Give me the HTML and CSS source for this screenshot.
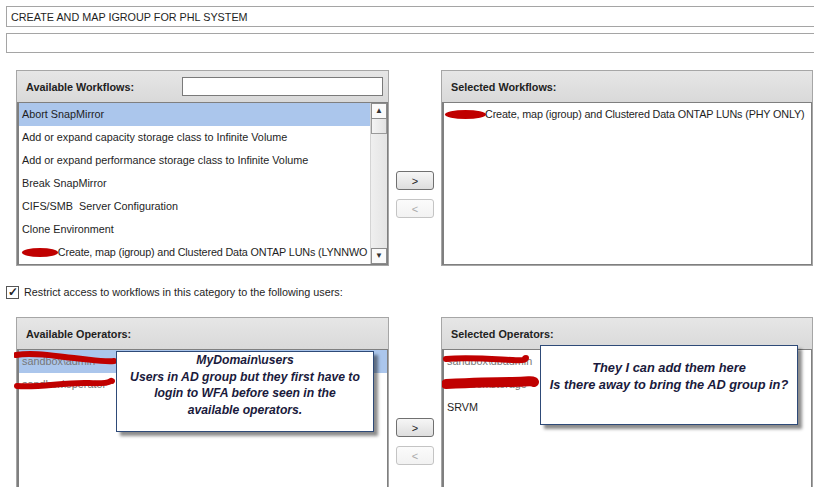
FILE: index.html
```html
<!DOCTYPE html>
<html lang="en">
<head>
    <meta charset="UTF-8">
    <title>Category - CREATE AND MAP IGROUP FOR PHL SYSTEM</title>
    <link rel="stylesheet" href="styles.css">
</head>
<body>
    <div class="field">CREATE AND MAP IGROUP FOR PHL SYSTEM</div>
    <div class="field empty"></div>

    <div class="picker workflows">
        <div class="panel">
            <div class="panel-head">
                <span>Available Workflows:</span>
                <div class="search"></div>
            </div>
            <div class="list with-scroll">
                <div class="rows">
                    <div class="row selected">Abort SnapMirror</div>
                    <div class="row">Add or expand capacity storage class to Infinite Volume</div>
                    <div class="row">Add or expand performance storage class to Infinite Volume</div>
                    <div class="row">Break SnapMirror</div>
                    <div class="row">CIFS/SMB&nbsp; Server Configuration</div>
                    <div class="row">Clone Environment</div>
                    <div class="row tight"><span class="blob"></span> Create, map (igroup) and Clustered Data ONTAP LUNs (LYNNWO</div>
                </div>
                <div class="scrollbar">
                    <div class="arrow up">&#9650;</div>
                    <div class="thumb"></div>
                    <div class="track"></div>
                    <div class="arrow down">&#9660;</div>
                </div>
            </div>
        </div>
        <div class="moves">
            <button class="move">&gt;</button>
            <button class="move" disabled>&lt;</button>
        </div>
        <div class="panel">
            <div class="panel-head"><span>Selected Workflows:</span></div>
            <div class="list">
                <div class="rows">
                    <div class="row tight"><span class="blob wide"></span>Create, map (igroup) and Clustered Data ONTAP LUNs (PHY ONLY)</div>
                </div>
            </div>
        </div>
    </div>

    <label class="restrict">
        <span class="check">&#10003;</span>
        Restrict access to workflows in this category to the following users:
    </label>

    <div class="picker operators">
        <div class="panel">
            <div class="panel-head"><span>Available Operators:</span></div>
            <div class="list">
                <div class="rows">
                    <div class="row selected muted">sandbox\admin</div>
                    <div class="row muted">sandbox\operator</div>
                </div>
            </div>
            <svg class="scribble left" width="110" height="50" viewBox="0 0 110 50">
                <path d="M2 5 C20 2, 40 6, 60 8 S 90 12, 100 11" stroke="#c00000" stroke-width="6" fill="none" stroke-linecap="round"/>
                <path d="M3 36 C25 38, 50 32, 75 33 S 95 30, 98 31" stroke="#c00000" stroke-width="6" fill="none" stroke-linecap="round"/>
            </svg>
            <div class="note note-left">
                MyDomain\users<br>
                Users in AD group but they first have to<br>
                login to WFA before seen in the<br>
                available operators.
            </div>
        </div>
        <div class="moves">
            <button class="move">&gt;</button>
            <button class="move" disabled>&lt;</button>
        </div>
        <div class="panel">
            <div class="panel-head"><span>Selected Operators:</span></div>
            <div class="list">
                <div class="rows">
                    <div class="row muted">sandbox\dbadmin</div>
                    <div class="row muted">sandbox\storage</div>
                    <div class="row">SRVM</div>
                </div>
            </div>
            <svg class="scribble right" width="110" height="50" viewBox="0 0 110 50">
                <path d="M4 9 C25 7, 50 9, 70 10 S 80 8, 84 8" stroke="#c00000" stroke-width="6" fill="none" stroke-linecap="round"/>
                <path d="M4 34 C25 33, 50 32, 70 32 S 88 30, 92 32" stroke="#c00000" stroke-width="10" fill="none" stroke-linecap="round"/>
            </svg>
            <div class="note note-right">
                They I can add them here<br>
                Is there away to bring the AD group in?
            </div>
        </div>
    </div>
</body>
</html>
```

FILE: styles.css
```css
body {
    margin: 0;
    background: #fff;
    font-family: "Liberation Sans", Arial, sans-serif;
    font-size: 10.8px;
    color: #1e1e1e;
    overflow: hidden;
    width: 814px;
    height: 487px;
}

.field {
    box-sizing: border-box;
    margin: 6px 0 0 6px;
    width: 820px;
    height: 21px;
    border: 1px solid #a5a5a5;
    padding: 4px 4px 0;
    background: #fff;
}

.field.empty {
    height: 20px;
}

.picker {
    display: flex;
    padding-left: 16px;
    margin-top: 17px;
}

.panel {
    position: relative;
    box-sizing: border-box;
    width: 373px;
    height: 196px;
    border: 1px solid #a6a6a6;
    display: flex;
    flex-direction: column;
}

.panel + .moves + .panel {
    width: 372px;
}

.operators .panel {
    height: 175px;
    border-bottom: none;
}

.panel-head {
    height: 31px;
    background: linear-gradient(#e6e6e6, #d9d9d9);
    display: flex;
    align-items: center;
    justify-content: space-between;
    padding: 0 5px 0 9px;
    font-weight: bold;
    color: #222;
    flex-shrink: 0;
}

.search {
    width: 199px;
    height: 17px;
    border: 1px solid #7a7a7a;
    background: #fff;
}

.list {
    flex: 1;
    display: flex;
    border: 1px solid #7f7f7f;
    border-left-width: 2px;
    background: #fff;
    overflow: hidden;
}

.operators .list {
    border-bottom: none;
}

.rows {
    flex: 1;
    min-width: 0;
    overflow: hidden;
}

.row {
    height: 23px;
    line-height: 22px;
    padding-left: 3px;
    white-space: nowrap;
    overflow: hidden;
}

.row.tight {
    letter-spacing: -0.15px;
}

.row.selected {
    background: #abc6ec;
}

.row.muted {
    color: #777;
}

.blob {
    display: inline-block;
    width: 36px;
    height: 9px;
    margin-right: -3px;
    background: #c00000;
    border-radius: 50%;
    vertical-align: -1px;
}

.blob.wide {
    width: 41px;
    margin-left: -2px;
    margin-right: -1px;
}

.scrollbar {
    width: 16px;
    flex-shrink: 0;
    display: flex;
    flex-direction: column;
    border-left: 1px solid #d4d4d4;
    background: #f0f0f0;
}

.arrow {
    box-sizing: border-box;
    height: 16px;
    border: 1px solid #8c8c8c;
    background: #fafafa;
    font-size: 8px;
    line-height: 14px;
    text-align: center;
    color: #333;
}

.thumb {
    height: 15px;
    box-sizing: border-box;
    border: 1px solid #9a9a9a;
    border-top: none;
    background: linear-gradient(90deg, #f4f4f4, #e2e2e2);
}

.track {
    flex: 1;
    background: linear-gradient(90deg, #efefef, #e4e4e4);
}

.moves {
    width: 52px;
    display: flex;
    flex-direction: column;
    align-items: center;
    padding-top: 101px;
    gap: 9px;
    flex-shrink: 0;
}

.move {
    width: 38px;
    height: 19px;
    padding: 0;
    border: 1px solid #707070;
    border-radius: 3px;
    background: linear-gradient(#f6f6f6, #dedede);
    font-family: "Liberation Sans", Arial, sans-serif;
    font-size: 11px;
    color: #222;
}

.move:disabled {
    border-color: #c4c4c4;
    background: linear-gradient(#fbfbfb, #f2f2f2);
    color: #aaa;
}

.restrict {
    display: flex;
    align-items: center;
    gap: 5px;
    margin: 19px 0 0 6px;
    height: 14px;
}

.check {
    box-sizing: border-box;
    width: 13px;
    height: 13px;
    border: 1px solid #555;
    background: #fff;
    font-size: 12px;
    line-height: 11px;
    font-weight: bold;
    text-align: center;
    color: #222;
}

.operators {
    margin-top: 18px;
}

.scribble {
    position: absolute;
    top: 32px;
}

.scribble.left {
    left: -3px;
}

.scribble.right {
    left: 0;
}

.note {
    position: absolute;
    box-sizing: border-box;
    border: 1px solid #2e4a78;
    background: #fff;
    box-shadow: 4px 4px 3px rgba(0, 0, 0, 0.45);
    font-family: "Liberation Sans", Arial, sans-serif;
    font-weight: bold;
    font-style: italic;
    font-size: 12.5px;
    line-height: 16.5px;
    color: #1a1a3c;
    text-align: center;
}

.note-left {
    left: 99px;
    top: 33px;
    width: 258px;
    height: 81px;
    padding-top: 0;
    font-size: 12.2px;
    line-height: 16.5px;
}

.note-right {
    left: 98px;
    top: 27px;
    width: 258px;
    height: 80px;
    padding-top: 14px;
    font-size: 12.8px;
}
```
